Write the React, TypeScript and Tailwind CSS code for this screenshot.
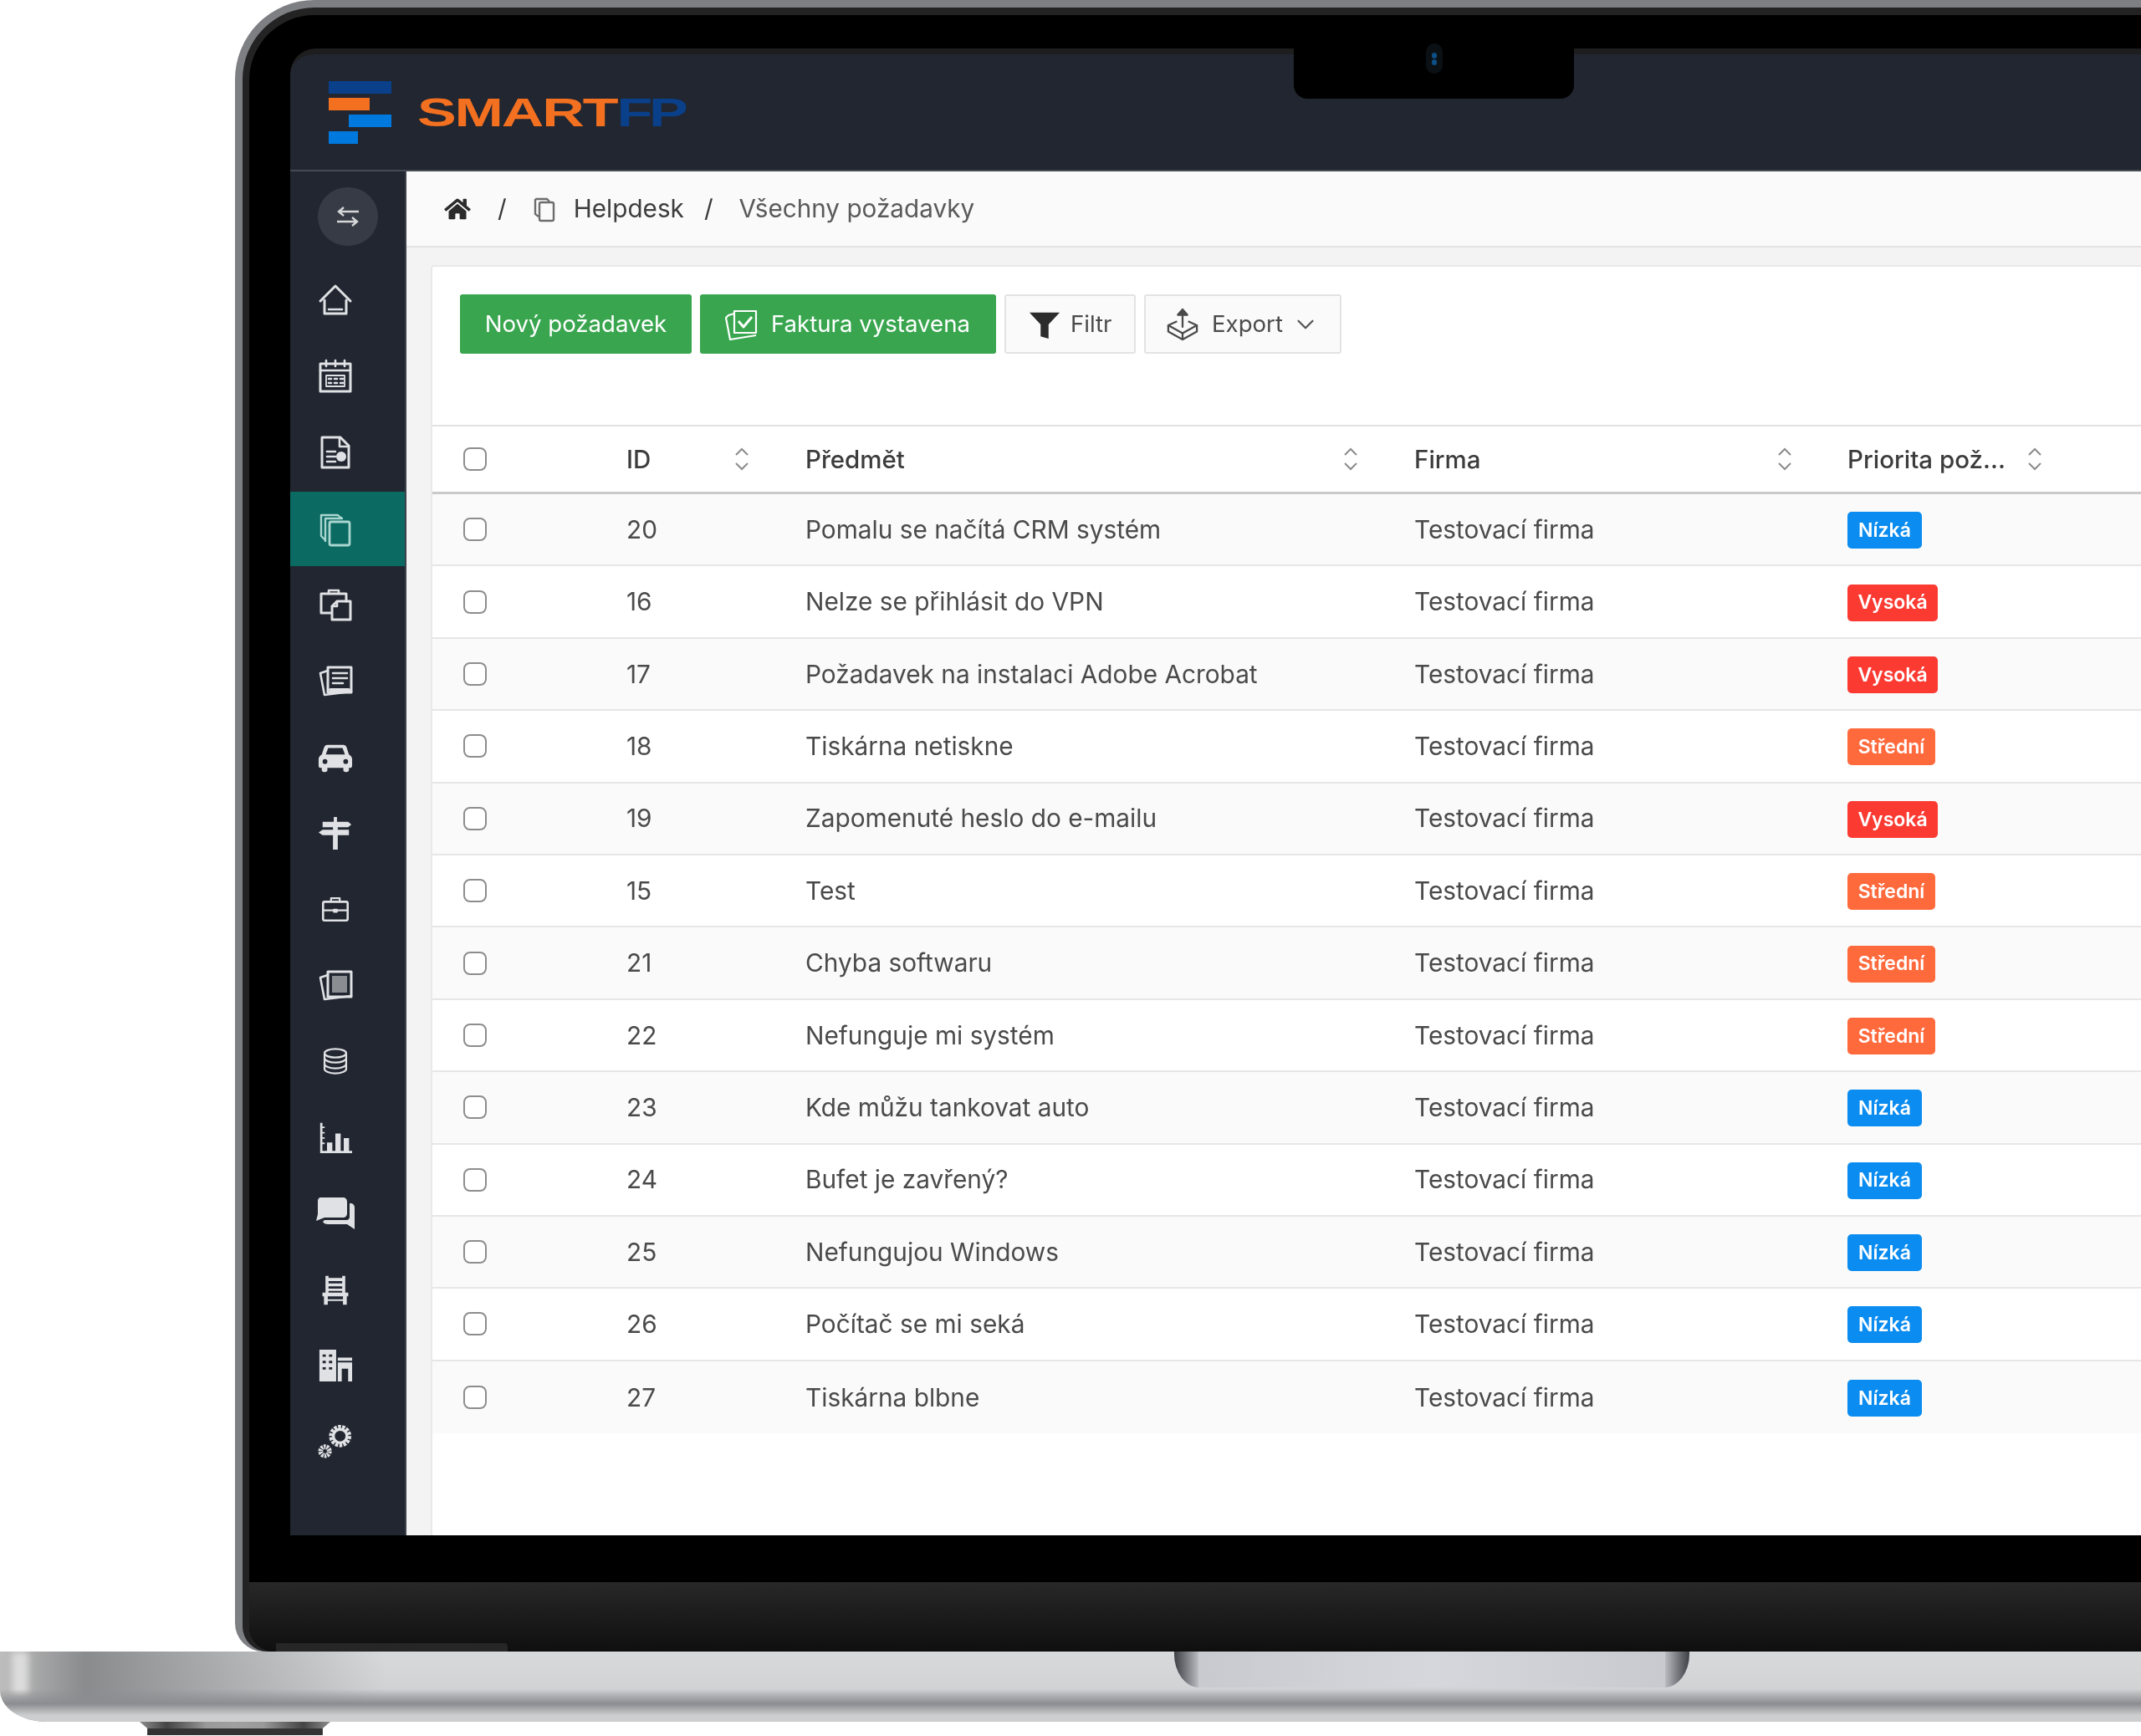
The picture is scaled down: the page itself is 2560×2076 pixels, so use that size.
import { ChevronDown } from 'lucide-react';

type Priority = 'Nízká' | 'Vysoká' | 'Střední';

const rows: { id: number; subject: string; priority: Priority }[] = [
  { id: 20, subject: 'Pomalu se načítá CRM systém', priority: 'Nízká' },
  { id: 16, subject: 'Nelze se přihlásit do VPN', priority: 'Vysoká' },
  { id: 17, subject: 'Požadavek na instalaci Adobe Acrobat', priority: 'Vysoká' },
  { id: 18, subject: 'Tiskárna netiskne', priority: 'Střední' },
  { id: 19, subject: 'Zapomenuté heslo do e-mailu', priority: 'Vysoká' },
  { id: 15, subject: 'Test', priority: 'Střední' },
  { id: 21, subject: 'Chyba softwaru', priority: 'Střední' },
  { id: 22, subject: 'Nefunguje mi systém', priority: 'Střední' },
  { id: 23, subject: 'Kde můžu tankovat auto', priority: 'Nízká' },
  { id: 24, subject: 'Bufet je zavřený?', priority: 'Nízká' },
  { id: 25, subject: 'Nefungujou Windows', priority: 'Nízká' },
  { id: 26, subject: 'Počítač se mi seká', priority: 'Nízká' },
  { id: 27, subject: 'Tiskárna blbne', priority: 'Nízká' },
];

const badgeClass: Record<Priority, string> = {
  'Nízká': 'bg-[#0b8cf0] w-[89px]',
  Vysoká: 'bg-[#fb3a32] w-[108px]',
  'Střední': 'bg-[#ff6a3d] w-[105px]',
};

const gridCols = 'grid grid-cols-[232px_214px_728px_518px_1fr] items-center';

function Ic({ children, className = 'w-[44px] h-[44px]' }: { children: React.ReactNode; className?: string }) {
  return (
    <svg
      viewBox="0 0 44 44"
      fill="none"
      stroke="currentColor"
      strokeWidth={2.6}
      strokeLinejoin="round"
      strokeLinecap="round"
      className={className}
    >
      {children}
    </svg>
  );
}

const sideIcons: { key: string; icon: React.ReactNode; active?: boolean }[] = [
  {
    key: 'home',
    icon: (
      <Ic>
        <path d="M4 23 22 5l18 18" strokeWidth={3} />
        <path d="M9 22v16h26V22" strokeWidth={3} />
        <path d="M14 33h16" />
      </Ic>
    ),
  },
  {
    key: 'calendar',
    icon: (
      <Ic>
        <path d="M4 7h36v33H4z" strokeWidth={3} />
        <path d="M4 15h36" />
        <path d="M11 3v7M33 3v7M22 3v7" />
        <path d="M11 21h22v13H11z" strokeWidth={1.8} />
        <path d="M14 25h3M21 25h3M28 25h3M14 30h3M21 30h3M28 30h3" strokeWidth={2.6} />
      </Ic>
    ),
  },
  {
    key: 'report',
    icon: (
      <Ic>
        <path d="M6 4h22l10 10v26H6z" strokeWidth={3} />
        <path d="M27 4v11h11" />
        <path d="M12 21h10M12 27h10M12 33h10" />
        <circle cx="29" cy="27" r="6" fill="currentColor" stroke="none" />
      </Ic>
    ),
  },
  {
    key: 'copy',
    active: true,
    icon: (
      <Ic>
        <path d="M5 5h20l4 4v-1M5 5v25l5 5" strokeWidth={2.4} />
        <path d="M10 9h20M10 9v27" strokeWidth={2.4} />
        <rect x="15" y="13" width="24" height="28" rx="2" strokeWidth={2.8} />
      </Ic>
    ),
  },
  {
    key: 'clipboard',
    icon: (
      <Ic>
        <path d="M16 32H5V9h30v9" strokeWidth={3} />
        <path d="M14 9V5h12v4" />
        <path d="M18 40V24l6-6h16v22z" strokeWidth={3} />
        <path d="M24 18v6h-6" />
      </Ic>
    ),
  },
  {
    key: 'news',
    icon: (
      <Ic>
        <path d="M13 6h28v30H13z" strokeWidth={3} />
        <path d="M13 10 4 13l5 26 32-4" />
        <path d="M19 13h17M19 19h17M19 25h12" />
        <path d="M16 33h22" strokeWidth={4} />
      </Ic>
    ),
  },
  {
    key: 'car',
    icon: (
      <svg viewBox="0 0 44 44" className="w-[42px] h-[42px]" fill="currentColor">
        <path
          fillRule="evenodd"
          d="M12 7h20c2 0 3 1 4 3l3 9c2 1 4 3 4 6v8c0 2-1 3-3 3h-1v3c0 1-1 2-3 2h-1c-2 0-3-1-3-2v-3H12v3c0 1-1 2-3 2H8c-2 0-3-1-3-2v-3H4c-2 0-3-1-3-3v-8c0-3 2-5 4-6l3-9c1-2 2-3 4-3zm1 4-3 8h24l-3-8zM9 25a3 3 0 1 0 0 6 3 3 0 0 0 0-6zm26 0a3 3 0 1 0 0 6 3 3 0 0 0 0-6z"
        />
      </svg>
    ),
  },
  {
    key: 'sign',
    icon: (
      <svg viewBox="0 0 44 44" className="w-[42px] h-[42px]" fill="currentColor">
        <path d="M20 2h4v6h14l4 3.5-4 3.500H6V8h14zM6 18h33v7H6l-5-3.500zM19 25h6v18h-6z" />
        <path d="M19 14h6v5h-6z" />
      </svg>
    ),
  },
  {
    key: 'briefcase',
    icon: (
      <Ic className="w-[38px] h-[38px]">
        <rect x="5" y="12" width="34" height="26" rx="2" strokeWidth={3} />
        <path d="M16 12V7h12v5M5 24h34" />
        <path d="M20 23h4v3h-4z" fill="currentColor" />
      </Ic>
    ),
  },
  {
    key: 'gallery',
    icon: (
      <Ic>
        <path d="M13 6h28v30H13z" strokeWidth={3} />
        <path d="M13 10 4 13l5 26 32-4" />
        <path d="M18 11h18v20H18z" fill="#8a8d92" stroke="none" />
      </Ic>
    ),
  },
  {
    key: 'database',
    icon: (
      <Ic className="w-[38px] h-[38px]">
        <ellipse cx="22" cy="11" rx="15" ry="6" />
        <path d="M7 11v22c0 3 7 6 15 6s15-3 15-6V11" />
        <path d="M7 18c0 3 7 6 15 6s15-3 15-6M7 26c0 3 7 6 15 6s15-3 15-6" />
      </Ic>
    ),
  },
  {
    key: 'chart',
    icon: (
      <svg viewBox="0 0 44 44" className="w-[40px] h-[40px]" fill="currentColor">
        <path d="M2 3h3v37h39v3H2zM5 8h3v2H5zM5 15h3v2H5zM5 22h3v2H5zM5 29h3v2H5zM11 29h7v11h-7zM22 17h7v23h-7zM33 23h7v17h-7z" />
      </svg>
    ),
  },
  {
    key: 'chat',
    icon: (
      <svg viewBox="0 0 48 44" className="w-[48px] h-[44px] shrink-0" fill="currentColor">
        <path d="M7 3h26c3 0 5 2 5 5v14c0 3-2 5-5 5H11l-10 4 2-8V8c0-3 1-5 4-5z" />
        <path d="M41 10h1c3 0 5 2 5 5v26l-9-6H15c-3 0-5-1-6-3l2-2h26c3 0 4-2 4-4z" />
      </svg>
    ),
  },
  {
    key: 'chair',
    icon: (
      <svg viewBox="0 0 44 44" className="w-[40px] h-[40px]" fill="currentColor">
        <path d="M9 4h4v3h18V4h4v22h-4V24H13v2H9zm4 7v3h18v-3zm0 7v3h18v-3zM5 26h34v5H5zM7 31h5v11H7zM32 31h5v11h-5zM12 35h20v2H12z" />
      </svg>
    ),
  },
  {
    key: 'building',
    icon: (
      <svg viewBox="0 0 44 44" className="w-[42px] h-[42px]" fill="currentColor">
        <path
          fillRule="evenodd"
          d="M2 2h21v40H2zm4 6v3h4V8zm8 0v3h4V8zM6 16v3h4v-3zm8 0v3h4v-3zM6 24v3h4v-3zm8 0v3h4v-3zM25 12h18v4H25zM25 18h18v24h-5V26h-8v16h-5z"
        />
      </svg>
    ),
  },
  {
    key: 'gears',
    icon: (
      <svg viewBox="0 0 44 44" className="w-[42px] h-[42px]" fill="none" stroke="currentColor">
        <circle cx="28" cy="15" r="11" strokeWidth={6} strokeDasharray="3.500 1.400" />
        <circle cx="28" cy="15" r="8.500" strokeWidth={3.5} />
        <circle cx="9" cy="34" r="5.500" strokeWidth={6} strokeDasharray="2.400 1" />
      </svg>
    ),
  },
];

function SortIcon() {
  return (
    <svg viewBox="0 0 18 28" className="w-[18px] h-[28px] text-[#8b8b8b]" fill="none" stroke="currentColor" strokeWidth={2}>
      <path d="M2 9 9 2l7 7" />
      <path d="M2 19l7 7 7-7" />
    </svg>
  );
}

function HeadCell({ label, sortWidth }: { label: string; sortWidth: string }) {
  return (
    <div className={`flex items-center justify-between font-medium text-[29.500px] text-[#3c3c3c] ${sortWidth}`}>
      <span>{label}</span>
      <SortIcon />
    </div>
  );
}

function Checkbox() {
  return <span className="block ml-[37px] w-[28px] h-[28px] rounded-[8px] border-[2.5px] border-[#8d8d8d] bg-white" />;
}

function Logo() {
  return (
    <div className="flex items-center">
      <div className="w-[75px] flex flex-col gap-[5px]">
        <div className="h-[15px] w-[75px] bg-[#0a4089]" />
        <div className="h-[15px] w-[49px] bg-[#f37021]" />
        <div className="h-[15px] w-[51px] ml-[24px] bg-[#0079de]" />
        <div className="h-[15px] w-[35px] bg-[#0079de]" />
      </div>
      <div className="ml-[31px] w-[321px] whitespace-nowrap origin-left scale-x-[1.43] font-['Liberation_Sans',sans-serif] font-bold text-[49px] leading-none tracking-[-1px]">
        <span className="text-[#f37021] tracking-[-1.500px]">SMART</span>
        <span className="text-[#0a4089] tracking-[-3px]">FP</span>
      </div>
    </div>
  );
}

export default function App() {
  return (
    <div className="relative w-[2560px] h-[2076px] overflow-hidden bg-white font-['Inter',sans-serif]">
      {/* lid */}
      <div className="pl-[281px] h-[1975px]">
        <div className="h-full rounded-tl-[95px] rounded-bl-[34px] bg-[#7e7f83] pl-[9px] pt-[9px]">
          <div className="h-full rounded-tl-[86px] rounded-bl-[30px] bg-[#232323] pl-[8px] pt-[9px]">
            <div className="relative h-full rounded-tl-[78px] rounded-bl-[30px] bg-black pt-[40px] flex flex-col overflow-hidden">
              <div className="pl-[49px]">
                <div className="h-[1778px] flex flex-col rounded-tl-[30px] overflow-hidden blur-[0.5px]">
                  {/* top bar */}
                  <div className="relative h-[147px] shrink-0 border-t-[7px] border-b-[2px] border-t-[#1e1e1e] border-b-[#454a52] bg-[#212630] pl-[46px] flex items-center rounded-tl-[30px]">
                    <Logo />
                  </div>
                  {/* body */}
                  <div className="flex-1 flex min-h-0">
                    <div className="w-[139px] shrink-0 bg-[#212630] border-r-[2px] border-r-[#3c4048] text-[#dfe1e4] flex flex-col">
                      <div className="h-[108px] flex items-center justify-center">
                        <div className="w-[72px] h-[70px] rounded-full bg-[#373b45] flex items-center justify-center">
                          <svg viewBox="0 0 30 30" className="w-[30px] h-[30px] text-[#d5d6d8]" fill="none" stroke="currentColor" strokeWidth={2.4}>
                            <path d="M28 9H5M10 4 4 9l6 5" />
                            <path d="M2 21h23M20 16l6 5-6 5" />
                          </svg>
                        </div>
                      </div>
                      {sideIcons.map((it) => (
                        <div
                          key={it.key}
                          className={`h-[91px] shrink-0 flex items-center pl-[32px] ${
                            it.active ? 'bg-[#0b6a61] text-[#a9d6d0] border-t-2 border-t-[#212630]' : ''
                          }`}
                        >
                          <span className="w-[44px] flex justify-center">{it.icon}</span>
                        </div>
                      ))}
                    </div>
                    {/* main */}
                    <div className="flex-1 min-w-0 flex flex-col bg-[#f3f3f3]">
                      <div className="h-[91px] shrink-0 bg-[#fafafa] border-b-[2px] border-b-[#e2e2e2] pl-[45px] flex items-center text-[29.700px] text-[#4a4a4a]">
                        <svg viewBox="0 0 576 512" className="w-[32px] h-[28px] text-[#2b2b2b]" fill="currentColor">
                          <path d="M280 148 96 300v164c0 9 7 16 16 16l112-1c9 0 16-7 16-16v-95c0-9 7-16 16-16h64c9 0 16 7 16 16v95c0 9 7 16 16 16l112 1c9 0 16-7 16-16V300L296 148a12 12 0 0 0-16 0zm291 103-83-69V44c0-7-5-12-12-12h-56c-7 0-12 5-12 12v72l-90-74a48 48 0 0 0-61 0L5 251c-5 4-6 12-2 17l26 31c4 5 12 6 17 2L280 107a12 12 0 0 1 16 0l234 194c5 4 13 3 17-2l26-31c4-5 3-13-2-17z" />
                        </svg>
                        <span className="ml-[32px] text-[#3a3a3a]">/</span>
                        <svg viewBox="0 0 28 32" className="ml-[31px] w-[28px] h-[32px] text-[#6d6d6d]" fill="none" stroke="currentColor" strokeWidth={2.4}>
                          <path d="M3 4h14l3 3M3 4v18l4 3" />
                          <rect x="8" y="8" width="17" height="22" rx="2" />
                        </svg>
                        <span className="ml-[21px] text-[#3d3d3d]">Helpdesk</span>
                        <span className="ml-[24px] text-[#3a3a3a]">/</span>
                        <span className="ml-[31px] text-[#5a5a5a]">Všechny požadavky</span>
                      </div>
                      <div className="flex-1 min-h-0 mt-[21px] ml-[29px] bg-white border-t-[2px] border-l-[2px] border-[#e9e9e9] rounded-tl-[4px]">
                        <div className="pl-[33px] pt-[33px] h-[189px] flex items-start gap-[10px] text-[27.600px]">
                          <div className="w-[277px] h-[71px] rounded-[3px] bg-[#39a64f] text-white flex items-center justify-center">
                            Nový požadavek
                          </div>
                          <div className="w-[354px] h-[71px] rounded-[3px] bg-[#39a64f] text-white flex items-center pl-[29px]">
                            <svg viewBox="0 0 40 40" className="w-[40px] h-[40px]" fill="none" stroke="currentColor" strokeWidth={2.2} strokeLinejoin="round">
                              <path d="M12 4h26v26H12z" />
                              <path d="M12 7 5 9l-3 3 5 26 31-5" />
                              <path d="M17 16l6 7 10-12" strokeWidth={3} />
                            </svg>
                            <span className="ml-[16px]">Faktura vystavena</span>
                          </div>
                          <div className="w-[157px] h-[71px] rounded-[3px] bg-[#fafafa] border-2 border-[#e3e3e3] text-[#4a4a4a] flex items-center pl-[27px]">
                            <svg viewBox="0 0 40 40" className="w-[38px] h-[38px] text-[#2c2c2c]" fill="currentColor">
                              <path d="M1 5h38L25 20v18l-10-3V20z" />
                            </svg>
                            <span className="ml-[12px]">Filtr</span>
                          </div>
                          <div className="w-[236px] h-[71px] rounded-[3px] bg-[#fafafa] border-2 border-[#e3e3e3] text-[#4a4a4a] flex items-center pl-[25px]">
                            <svg viewBox="0 0 40 40" className="w-[38px] h-[40px] text-[#4a4a4a]" fill="none" stroke="currentColor" strokeWidth={2.4} strokeLinejoin="round">
                              <path d="M13 16 2 21l18 10 18-10-11-5" />
                              <path d="M2 21v8l18 10 18-10v-8M20 31v8" />
                              <path d="M20 24V6" />
                              <path d="M14 8 20 1l6 7z" fill="currentColor" />
                            </svg>
                            <span className="ml-[16px]">Export</span>
                            <ChevronDown size={34} strokeWidth={1.600} className="ml-[10px] text-[#555]" />
                          </div>
                        </div>
                        {/* table */}
                        <div className="text-[29.800px] text-[#4a4a4a]">
                          <div className={`${gridCols} h-[83px] border-t-[2px] border-b-[3px] border-t-[#e2e2e2] border-b-[#c9c9c9]`}>
                            <Checkbox />
                            <HeadCell label="ID" sortWidth="w-[147px]" />
                            <HeadCell label="Předmět" sortWidth="w-[661px]" />
                            <HeadCell label="Firma" sortWidth="w-[452px]" />
                            <HeadCell label="Priorita pož..." sortWidth="w-[233px]" />
                          </div>
                          {rows.map((row, i) => (
                            <div
                              key={row.id}
                              className={`${gridCols} h-[86.400px] ${i % 2 === 0 ? 'bg-[#fafafa]' : 'bg-white'} ${
                                i < rows.length - 1 ? 'border-b-2 border-b-[#e6e6e6]' : ''
                              }`}
                            >
                              <Checkbox />
                              <div>{row.id}</div>
                              <div>{row.subject}</div>
                              <div>Testovací firma</div>
                              <div>
                                <span
                                  className={`flex items-center justify-center mt-[2px] h-[44px] rounded-[5px] text-white text-[23px] font-semibold ${badgeClass[row.priority]}`}
                                >
                                  {row.priority}
                                </span>
                              </div>
                            </div>
                          ))}
                        </div>
                      </div>
                    </div>
                  </div>
                </div>
              </div>
              {/* chin */}
              <div className="mt-[56px] flex-1 bg-gradient-to-b from-[#282828] to-[#0f0f0f]" />
            </div>
          </div>
        </div>
      </div>

      {/* notch and camera, over the top bar */}
      <div className="absolute left-[1547px] top-[56px] w-[335px] h-[62px] bg-black rounded-b-[16px] flex items-start justify-center">
        <div className="w-[20px] h-[36px] mt-[-4px] rounded-full bg-[#0b1014] flex flex-col items-center justify-center gap-[1px]">
          <span className="w-[6px] h-[7px] rounded-full bg-[#0d4f86]" />
          <span className="w-[6px] h-[7px] rounded-full bg-[#0d4f86]" />
        </div>
      </div>
      <div className="absolute left-[330px] w-[277px] top-[1965px] h-[10px] bg-[#262626] rounded-tr-[4px]" />

      {/* base */}
      <div className="relative h-[84px] [border-bottom-left-radius:55px_38px] overflow-hidden bg-gradient-to-b from-[#d8d9db] via-[#d2d3d5] to-[#bfc0c2]">
        <div className="absolute inset-0 bg-gradient-to-r from-[#bdbdbd] via-[#8a8b8d] via-[4%] to-transparent to-[18%]" />
        <div className="absolute left-[14px] top-0 w-[20px] h-[52px] bg-[#dcdcdc] blur-[4px]" />
        <div className="absolute left-0 right-0 top-[45px] h-[39px] bg-gradient-to-b from-transparent via-[#8c8d90] via-[45%] to-[#cdcecf] to-[80%]" />
        <div className="absolute left-[1404px] w-[616px] top-0 h-[43px] [border-radius:0_0_30px_30px/0_0_40px_40px] overflow-hidden bg-[#bbbcc2]">
          <div className="absolute inset-y-0 left-0 w-[30px] bg-gradient-to-r from-[#3f4046] to-[#c0c1c7]" />
          <div className="absolute inset-y-0 right-0 w-[30px] bg-gradient-to-l from-[#3f4046] to-[#c0c1c7]" />
          <div className="absolute inset-y-0 left-[29px] right-[29px] bg-gradient-to-r from-[#c9cad0] via-[#d6d7dd] to-[#c9cad0]" />
        </div>
      </div>
      {/* foot */}
      <div className="ml-[167px] w-[228px] h-[17px] flex flex-col [clip-path:polygon(0_0,100%_0,96%_45%,96%_100%,4%_100%,4%_45%)]">
        <div className="relative h-[8px] bg-gradient-to-r from-[#8a8a8a] via-[#a0a0a0] to-[#8a8a8a]">
          <div className="absolute inset-0 bg-gradient-to-r from-transparent via-[#444] via-[14%] to-transparent to-[35%]" />
          <div className="absolute inset-0 bg-gradient-to-l from-transparent via-[#444] via-[14%] to-transparent to-[35%]" />
        </div>
        <div className="h-[8px] bg-[#333]" />
      </div>
    </div>
  );
}
